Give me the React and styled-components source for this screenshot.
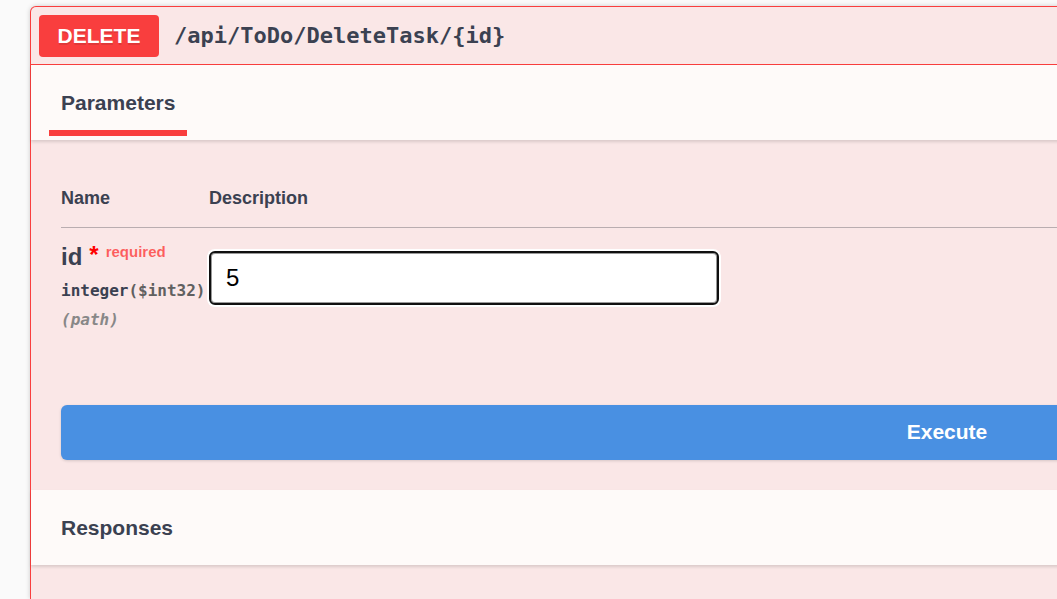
import React, { useState } from "react";
import styled, { createGlobalStyle } from "styled-components";

const sans = `"Liberation Sans", Arial, sans-serif`;
const mono = `"DejaVu Sans Mono", Consolas, monospace`;
const ink = "#3b4151";
const danger = "#f93e3e";

const GlobalStyle = createGlobalStyle`
  *, *::before, *::after { box-sizing: border-box; }
  body {
    margin: 0;
    background: #fafafa;
    color: ${ink};
    font-family: ${sans};
    overflow-x: hidden;
  }
`;

const Page = styled.main`
  min-height: 100vh;
  padding: 6px 0 0 30px;
  overflow: hidden;
`;

const Operation = styled.section`
  min-width: 1834px;
  min-height: calc(100vh - 6px);
  border: 1px solid ${danger};
  border-bottom: 0;
  border-radius: 6px 6px 0 0;
  background: #fae7e7;
  box-shadow: 0 0 5px rgba(0, 0, 0, 0.19);
`;

const Summary = styled.header`
  display: flex;
  align-items: center;
  gap: 15px;
  padding: 8px;
  height: 58px;
  border-bottom: 1px solid ${danger};
`;

const Method = styled.span`
  width: 120px;
  border-radius: 4px;
  background: ${danger};
  color: #fff;
  font-size: 21px;
  font-weight: 700;
  line-height: 42px;
  text-align: center;
  text-shadow: 0 2px 0 rgba(0, 0, 0, 0.1);
`;

const Path = styled.span`
  font: 700 22px/28px ${mono};
`;

const SectionBar = styled.div`
  display: flex;
  align-items: flex-start;
  height: 75px;
  padding: 0 18px;
  background: #fefaf9;
  box-shadow: 0 2px 3px rgba(0, 0, 0, 0.13);
`;

const SectionTitle = styled.h4`
  margin: 0;
  padding: 26px 12px 15px;
  border-bottom: 6px solid ${(p) => (p.$active ? danger : "transparent")};
  font-size: 21px;
  line-height: 24px;
`;

const ParametersBody = styled.div`
  padding: 29px 30px 0;
`;

const ParameterTable = styled.table`
  width: 100%;
  border-collapse: collapse;
  table-layout: fixed;
`;

const HeadCell = styled.th`
  width: ${(p) => p.$width || "auto"};
  height: 58px;
  padding: 18px 0;
  border-bottom: 1px solid #b9adb0;
  font-size: 18px;
  line-height: 20px;
  text-align: left;
`;

const Cell = styled.td`
  padding: ${(p) => p.$top} 0 0;
  vertical-align: top;
`;

const ParameterName = styled.label`
  display: flex;
  align-items: flex-start;
  gap: 7px;
  font-size: 24px;
  font-weight: 700;
  line-height: 30px;
`;

const Star = styled.span`
  color: #f00;
  line-height: 26px;
`;

const Required = styled.span`
  color: rgba(255, 0, 0, 0.6);
  font-size: 15px;
  line-height: 20px;
`;

const ParameterType = styled.div`
  padding-top: 7px;
  font: 700 16px/24px ${mono};
`;

const Format = styled.span`
  color: #606060;
`;

const Location = styled.div`
  padding-top: 5px;
  color: #888;
  font: italic 700 16px/24px ${mono};
`;

const ValueInput = styled.input`
  display: block;
  width: 510px;
  height: 54px;
  padding: 0 15px;
  border: 2px solid #101010;
  border-radius: 6px;
  outline: 0;
  background: #fff;
  box-shadow: 0 0 0 2px #fff, inset 0 0 0 1px #999;
  color: #000;
  font: 24px ${sans};
`;

const ExecuteRow = styled.div`
  padding: 73px 30px 30px;
`;

const ExecuteButton = styled.button`
  display: block;
  width: 100%;
  height: 55px;
  padding: 0;
  border: 0;
  border-radius: 6px;
  background: #4990e2;
  box-shadow: 0 1px 3px rgba(0, 0, 0, 0.15);
  color: #fff;
  font: 700 21px ${sans};
`;

export default function App() {
  const [value, setValue] = useState("5");

  return (
    <>
      <GlobalStyle />
      <Page>
        <Operation>
          <Summary>
            <Method>DELETE</Method>
            <Path>/api/ToDo/DeleteTask/&#123;id&#125;</Path>
          </Summary>
          <SectionBar>
            <SectionTitle $active>Parameters</SectionTitle>
          </SectionBar>
          <ParametersBody>
            <ParameterTable>
              <thead>
                <tr>
                  <HeadCell $width="148px">Name</HeadCell>
                  <HeadCell>Description</HeadCell>
                </tr>
              </thead>
              <tbody>
                <tr>
                  <Cell $top="14px">
                    <ParameterName htmlFor="parameter-id">
                      id <Star>*</Star> <Required>required</Required>
                    </ParameterName>
                    <ParameterType>
                      integer<Format>($int32)</Format>
                    </ParameterType>
                    <Location>(path)</Location>
                  </Cell>
                  <Cell $top="23px">
                    <ValueInput
                      id="parameter-id"
                      type="text"
                      value={value}
                      onChange={(e) => setValue(e.target.value)}
                    />
                  </Cell>
                </tr>
              </tbody>
            </ParameterTable>
          </ParametersBody>
          <ExecuteRow>
            <ExecuteButton type="button">Execute</ExecuteButton>
          </ExecuteRow>
          <SectionBar>
            <SectionTitle>Responses</SectionTitle>
          </SectionBar>
        </Operation>
      </Page>
    </>
  );
}
